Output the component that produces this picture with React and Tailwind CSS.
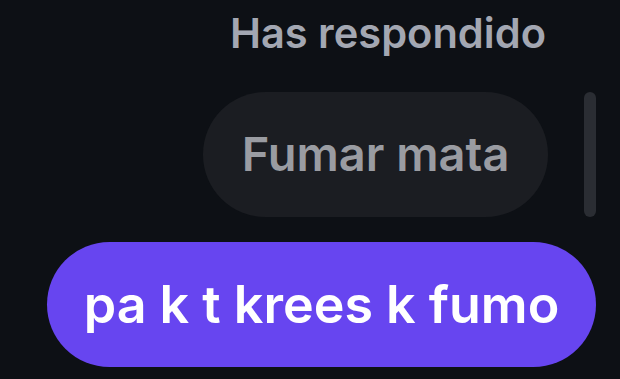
export default function App() {
  return (
    <div
      className="flex h-[379px] w-[620px] flex-col items-end overflow-hidden bg-[#0d1015] pr-[24px] text-right"
      style={{ fontFamily: "Inter, 'Noto Sans', sans-serif" }}
    >
      <p className="mt-[9px] mr-[50px] text-[41.6px] leading-[48px] font-semibold text-[#a3a7b2]">
        Has respondido
      </p>

      <div className="mt-[35px] flex items-stretch gap-[36px]">
        <div className="flex h-[125px] w-[345px] items-center justify-center rounded-full bg-[#1b1d22]">
          <span className="text-[47px] font-semibold text-[#9a9ca2]">
            Fumar mata
          </span>
        </div>
        <div className="w-[12px] rounded-full bg-[#2a2d33]" />
      </div>

      <div className="mt-[25px] flex h-[125px] w-[549px] items-center justify-center rounded-full bg-[#6745f0]">
        <span className="text-[52px] font-semibold text-white">
          pa k t krees k fumo
        </span>
      </div>
    </div>
  );
}
